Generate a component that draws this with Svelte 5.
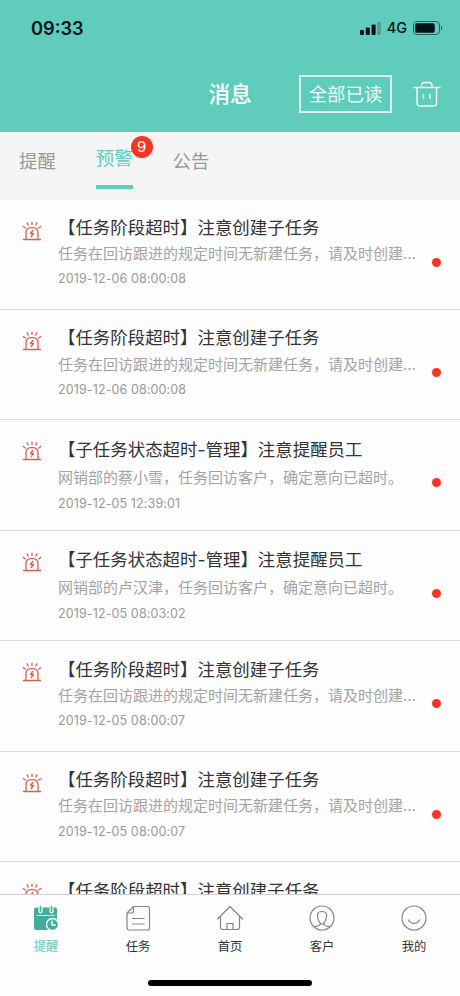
<script lang="ts">
  type Message = {
    title: string;
    text: string;
    time: string;
    short?: boolean;
  };

  const stageTitle = '【任务阶段超时】注意创建子任务';
  const stageText = '任务在回访跟进的规定时间无新建任务，请及时创建…';
  const statusTitle = '【子任务状态超时-管理】注意提醒员工';

  const messages: Message[] = [
    { title: stageTitle, text: stageText, time: '2019-12-06 08:00:08' },
    { title: stageTitle, text: stageText, time: '2019-12-06 08:00:08' },
    { title: statusTitle, text: '网销部的蔡小雪，任务回访客户，确定意向已超时。', time: '2019-12-05 12:39:01', short: true },
    { title: statusTitle, text: '网销部的卢汉津，任务回访客户，确定意向已超时。', time: '2019-12-05 08:03:02', short: true },
    { title: stageTitle, text: stageText, time: '2019-12-05 08:00:07' },
    { title: stageTitle, text: stageText, time: '2019-12-05 08:00:07' },
    { title: stageTitle, text: stageText, time: '2019-12-05 08:00:07' }
  ];

  const tabs = [
    { label: '提醒', count: 0 },
    { label: '预警', count: 9 },
    { label: '公告', count: 0 }
  ];

  const navItems = [
    { icon: 'calendar', label: '提醒' },
    { icon: 'task', label: '任务' },
    { icon: 'home', label: '首页' },
    { icon: 'customer', label: '客户' },
    { icon: 'mine', label: '我的' }
  ];

  let activeTab = $state(1);
  let activeNav = $state(0);
</script>

<div class="screen">
  <header class="header">
    <div class="status">
      <span class="clock">09:33</span>
      <div class="status-right">
        <svg class="signal" width="21" height="13" viewBox="0 0 21 13">
          <rect x="0" y="8" width="4" height="5" rx="1" />
          <rect x="5.8" y="5.4" width="4" height="7.6" rx="1" />
          <rect x="11.6" y="2.6" width="4" height="10.4" rx="1" />
          <rect x="17.2" y="0" width="3.6" height="13" rx="1" opacity="0.25" />
        </svg>
        <span class="network">4G</span>
        <svg width="30" height="14" viewBox="0 0 30 14">
          <rect x="0.5" y="0.5" width="26" height="13" rx="3.6" fill="none" stroke="#06121a" stroke-opacity="0.6" />
          <rect x="2.2" y="2.2" width="19.6" height="9.6" rx="2" fill="#06121a" />
          <path d="M28 4.8c1.6.6 1.6 3.8 0 4.4z" fill="#06121a" fill-opacity="0.6" />
        </svg>
      </div>
    </div>
    <div class="navbar">
      <h1 class="heading">消息</h1>
      <div class="actions">
        <button class="read-all">全部已读</button>
        <button class="trash" aria-label="清空">
          <svg width="28" height="28" viewBox="0 0 28 28" fill="none" stroke="#effcf9" stroke-width="1.4" stroke-linecap="round">
            <path d="M1 7.500h26M8.500 7.200V5.500a3 3 0 0 1 3-3h4.500a3 3 0 0 1 3 3v1.700M4 7.500v15.500a3 3 0 0 0 3 3h13.500a3 3 0 0 0 3-3V7.500M10.500 14.500v4M17 14.500v4" />
          </svg>
        </button>
      </div>
    </div>
  </header>

  <nav class="tabs">
    {#each tabs as tab, i}
      <button class="tab" class:active={activeTab === i} onclick={() => (activeTab = i)}>
        {tab.label}
        {#if tab.count}
          <span class="badge">{tab.count}</span>
        {/if}
      </button>
    {/each}
  </nav>

  <main class="list">
    {#each messages as message}
      <article class="item" class:short={message.short}>
        <svg class="alarm" width="20" height="20" viewBox="0 0 20 20" fill="none" stroke="#d9604f" stroke-width="1.3" stroke-linecap="round">
          <path d="M1.500 18.500h17M4 18.200v-7a4.500 4.500 0 0 1 4.500-4.500h3a4.500 4.500 0 0 1 4.500 4.500v7" />
          <path d="M10 1.200v2.300M5.200 1.900l1 2.100M14.800 1.900l-1 2.100M1.200 5.500l2 1.500M18.800 5.500l-2 1.500" />
          <path d="M10.800 9.500l-2.300 3h3l-2.300 3" stroke-linejoin="round" />
        </svg>
        <div class="body">
          <h2 class="title">{message.title}</h2>
          <p class="text">{message.text}</p>
          <time class="time">{message.time}</time>
        </div>
        <span class="dot"></span>
      </article>
    {/each}
  </main>

  <footer class="footer">
    <div class="bottom-nav">
      {#each navItems as item, i}
        <button class="nav-item" class:active={activeNav === i} onclick={() => (activeNav = i)}>
          <svg width="28" height="28" viewBox="0 0 28 28" fill="none" stroke="#858585" stroke-width="1.2" stroke-linecap="round" stroke-linejoin="round">
            {#if item.icon === 'calendar'}
              <path d="M4 3.500h19a2 2 0 0 1 2 2V24a2 2 0 0 1-2 2H4a2 2 0 0 1-2-2V5.500a2 2 0 0 1 2-2z" fill="#43ad9b" stroke="none" />
              <path d="M8.500 3v4.500M19.500 3v4.500" stroke="#fdfdfd" stroke-width="4" />
              <path d="M8.500 2.500v5M19.500 2.500v5" stroke="#43ad9b" stroke-width="1.600" />
              <path d="M5 11.500h17.500" stroke="#d8f3ed" />
              <circle cx="20.500" cy="20.500" r="6" fill="#43ad9b" stroke="#fdfdfd" stroke-width="1.400" />
              <path d="M20 17v4h3.200" stroke="#fdfdfd" stroke-width="1.400" />
            {:else if item.icon === 'task'}
              <path d="M9.500 2.500h14a2 2 0 0 1 2 2v19.500a2 2 0 0 1-2 2H5a2 2 0 0 1-2-2V9zM9.500 2.500V7a2 2 0 0 1-2 2H3M8.500 14.500h11.500M8.500 20h11.500" />
            {:else if item.icon === 'home'}
              <path d="M1.500 15L14 2.500 26.500 15M4.500 12.500V23a2.500 2.500 0 0 0 2.500 2.500h14a2.500 2.500 0 0 0 2.500-2.500V12.500M11 25.500v-6h6v6" />
            {:else if item.icon === 'customer'}
              <circle cx="14" cy="14" r="12" />
              <path d="M6.500 23c2.500-1 5.500-.5 6-3.500-2-2-3-5.500-3-9C10 6.500 18 6.500 18.500 10.500c0 3.500-1 7-3 9 .5 3 3.500 2.500 6 3.500M12.500 19.500c1 .8 2 .8 3 0" />
            {:else}
              <circle cx="14" cy="14" r="12" />
              <path d="M8.500 16c2.500 4.600 8.500 4.600 11 0" />
            {/if}
          </svg>
          <span class="nav-label">{item.label}</span>
        </button>
      {/each}
    </div>
    <div class="home-bar"></div>
  </footer>
</div>

<style>
  :global(body) {
    margin: 0;
  }

  .screen {
    display: flex;
    flex-direction: column;
    width: 460px;
    height: 996px;
    overflow: hidden;
    background-color: #fdfdfd;
    font-family: Inter, 'Noto Sans CJK SC', sans-serif;
  }

  button {
    margin: 0;
    padding: 0;
    border: none;
    background: none;
    font-family: inherit;
    cursor: pointer;
  }

  .header {
    flex: none;
    height: 132px;
    background-color: #60ccbb;
  }

  .status {
    display: flex;
    align-items: center;
    justify-content: space-between;
    height: 56px;
    padding: 0 17px 0 31px;
    color: #06121a;
  }

  .clock {
    font-size: 18.2px;
    font-weight: 600;
  }

  .status-right {
    display: flex;
    align-items: center;
    gap: 6px;
  }

  .signal {
    fill: #06121a;
  }

  .network {
    font-size: 14.5px;
    font-weight: 500;
    line-height: 16px;
  }

  .navbar {
    display: grid;
    grid-template-columns: 1fr auto 1fr;
    align-items: center;
    height: 76px;
  }

  .heading {
    grid-column: 2;
    margin: 0;
    color: #fff;
    font-size: 21.6px;
    font-weight: 500;
    line-height: 30px;
  }

  .actions {
    display: flex;
    align-items: center;
    justify-content: flex-end;
    gap: 21px;
    padding-right: 19px;
  }

  .read-all {
    box-sizing: border-box;
    width: 93px;
    height: 38px;
    padding-bottom: 2px;
    border: 2px solid #d5f4ee;
    color: #effcf9;
    font-size: 18.4px;
    font-weight: 400;
    white-space: nowrap;
  }

  .trash {
    display: flex;
  }

  .tabs {
    display: flex;
    flex: none;
    gap: 40px;
    height: 67.5px;
    padding-left: 19px;
    background-color: #f5f5f5;
  }

  .tab {
    position: relative;
    box-sizing: border-box;
    height: 57px;
    color: #999;
    font-size: 18.4px;
    font-weight: 400;
    line-height: 58px;
  }

  .tab.active {
    border-bottom: 4px solid #60ccbb;
    color: #60ccbb;
    line-height: 53px;
  }

  .badge {
    position: absolute;
    top: 4px;
    right: -20px;
    width: 22px;
    height: 22px;
    border-radius: 50%;
    background-color: #f43424;
    color: #fff;
    font-size: 15px;
    line-height: 22px;
    text-align: center;
  }

  .list {
    flex: 1;
    min-height: 0;
    overflow: hidden;
  }

  .item {
    display: flex;
    box-sizing: border-box;
    height: 110.45px;
    padding-left: 22px;
    border-bottom: 1px solid #dcdcdc;
  }

  .alarm {
    flex: none;
    margin-top: 21px;
  }

  .body {
    flex: none;
    width: 362px;
    margin-left: 16px;
    padding-top: 15.4px;
    white-space: nowrap;
  }

  .title {
    margin: 0;
    color: #333;
    font-size: 17.45px;
    font-weight: 400;
    line-height: 26px;
  }

  .text {
    margin: 1.3px 0 0;
    color: #a3a3a3;
    font-size: 15px;
    font-weight: 400;
    line-height: 24px;
  }

  .time {
    display: block;
    margin-top: 4.3px;
    color: #999;
    font-size: 12.5px;
    line-height: 18px;
    letter-spacing: 0.12px;
  }

  .short .body {
    padding-top: 16.6px;
  }

  .short .text {
    margin-top: 3px;
  }

  .short .time {
    margin-top: 5px;
  }

  .dot {
    flex: none;
    width: 9px;
    height: 9px;
    margin: 58px 0 0 12px;
    border-radius: 50%;
    background-color: #f43424;
  }

  .footer {
    box-sizing: border-box;
    flex: none;
    height: 102px;
    border-top: 1px solid #cfcfcf;
    background-color: #fdfdfd;
  }

  .bottom-nav {
    display: grid;
    grid-template-columns: repeat(5, 1fr);
    height: 85px;
  }

  .nav-item {
    display: flex;
    flex-direction: column;
    align-items: center;
    gap: 7px;
    padding-top: 9px;
    color: #333;
  }

  .nav-item.active {
    color: #60ccbb;
  }

  .nav-label {
    font-size: 12.3px;
    line-height: 16px;
  }

  .home-bar {
    width: 164px;
    height: 6px;
    margin: 0 auto;
    border-radius: 3px;
    background-color: #000;
  }
</style>
